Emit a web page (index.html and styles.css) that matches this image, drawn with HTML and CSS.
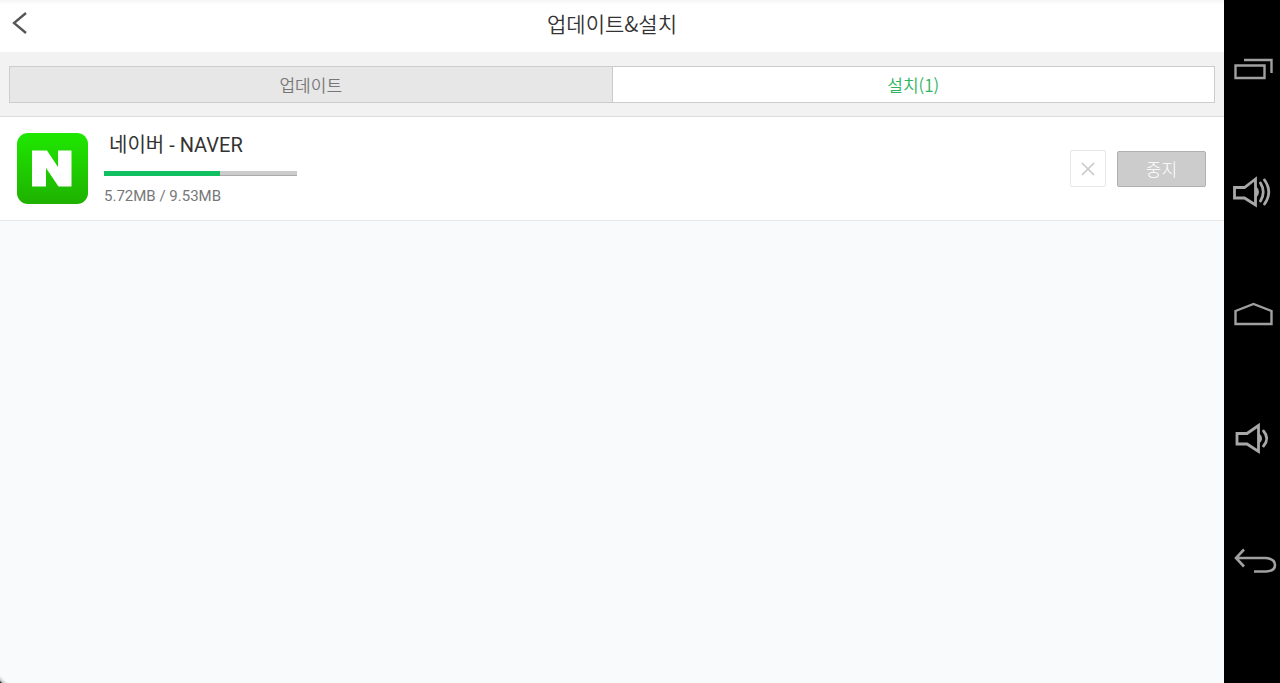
FILE: index.html
```
<!DOCTYPE html>
<html lang="ko">
<head>
    <meta charset="UTF-8">
    <meta name="viewport" content="width=device-width, initial-scale=1.0">
    <title>업데이트&amp;설치</title>
    <link rel="stylesheet" href="styles.css">
</head>
<body>
    <div class="app">
        <header class="header">
            <button class="back-btn" aria-label="뒤로">
                <svg width="16" height="24" viewBox="0 0 16 24"><path d="M14 2 L2 12 L14 22" fill="none" stroke="#555" stroke-width="2.3"/></svg>
            </button>
            <h1>업데이트&amp;설치</h1>
        </header>

        <div class="tab-bar">
            <div class="tabs" role="tablist">
                <button class="tab" role="tab" aria-selected="false">업데이트</button>
                <button class="tab active" role="tab" aria-selected="true">설치(1)</button>
            </div>
        </div>

        <main>
            <ul class="app-list">
                <li class="app-item">
                    <svg class="app-icon" viewBox="0 0 71 71">
                        <defs>
                            <linearGradient id="green" x1="0" y1="0" x2="0" y2="1">
                                <stop offset="0" stop-color="#1fe800"/>
                                <stop offset="1" stop-color="#1fb100"/>
                            </linearGradient>
                        </defs>
                        <rect width="71" height="71" rx="11" fill="url(#green)"/>
                        <path d="M15 17.5H30L41 34V17.5H54.5V53.5H41.5L29 35V53.5H15Z" fill="#fff"/>
                    </svg>
                    <div class="app-info">
                        <h2>네이버 - NAVER</h2>
                        <progress value="5.72" max="9.53" aria-label="다운로드"></progress>
                        <p>5.72MB / 9.53MB</p>
                    </div>
                    <button class="cancel-btn" aria-label="취소">
                        <svg width="14" height="14" viewBox="0 0 14 14"><path d="M1 1L13 13M13 1L1 13" stroke="#c8c8c8" stroke-width="1.6"/></svg>
                    </button>
                    <button class="stop-btn">중지</button>
                </li>
            </ul>
        </main>
    </div>

    <nav class="system-bar">
        <button aria-label="최근 앱">
            <svg width="44" height="40" viewBox="0 0 44 40"><path d="M5.5 16.5H34.5V29H5.5ZM14 11H41.5V24" fill="none" stroke="#a0a0a0" stroke-width="2.4"/></svg>
        </button>
        <button aria-label="볼륨 높이기">
            <svg width="44" height="40" viewBox="0 0 44 40"><g fill="none" stroke="#a8a8a8" stroke-width="2.8"><path d="M4.5 15.5H14.5L25.5 7V33L14.5 26H4.5Z"/><path d="M30.5 11Q36 20 30.5 29M34.5 8Q43 20 34.5 32" stroke-linecap="round"/></g><path d="M26 14Q32 20 26 26Z" fill="#a8a8a8"/></svg>
        </button>
        <button aria-label="홈">
            <svg width="44" height="40" viewBox="0 0 44 40"><path d="M5.5 16L23.5 9L41.5 16V29H5.5Z" fill="none" stroke="#a0a0a0" stroke-width="2.4"/></svg>
        </button>
        <button aria-label="볼륨 낮추기">
            <svg width="44" height="40" viewBox="0 0 44 40"><g fill="none" stroke="#a8a8a8" stroke-width="2.8"><path d="M7 15.5H17L28.5 7.5V33.5L17 26H7Z"/><path d="M33.5 13Q40 20.5 33.5 28" stroke-linecap="round"/></g><path d="M29 15Q35 20.5 29 26Z" fill="#a8a8a8"/></svg>
        </button>
        <button aria-label="뒤로 가기">
            <svg width="44" height="40" viewBox="0 0 44 40"><path d="M14 8.5L6 17L14 25.5M6 17H36Q45 18 45 24Q45 30 36 30.5H24" fill="none" stroke="#a0a0a0" stroke-width="2.6"/></svg>
        </button>
    </nav>
</body>
</html>
```
FILE: styles.css
```
* {
    box-sizing: border-box;
}
body {
    display: flex;
    min-height: 100vh;
    margin: 0;
    background: #f9fafc;
    font-family: Roboto, "Noto Sans CJK KR", sans-serif;
}
h1, h2, p, ul {
    margin: 0;
    padding: 0;
}
button {
    padding: 0;
    border: none;
    background: none;
    font-family: inherit;
    cursor: pointer;
}
svg {
    display: block;
    overflow: visible;
}
.app {
    position: relative;
    flex: 1;
}
/* rounded screen corner */
.app::after {
    content: "";
    position: absolute;
    bottom: 0;
    left: 0;
    width: 8px;
    height: 8px;
    background: linear-gradient(45deg, #222 5%, #ccc 20%, transparent 50%);
}
.header {
    display: grid;
    grid-template-columns: 40px 1fr 40px;
    align-items: center;
    height: 52px;
    padding-bottom: 6px;
    background: linear-gradient(#f5f5f5, #fff 5px);
}
.back-btn {
    padding-left: 12px;
}
.header h1 {
    color: #333;
    font-family: "Noto Sans CJK KR", sans-serif;
    font-size: 21px;
    font-weight: 350;
    line-height: 28px;
    text-align: center;
}
.tab-bar {
    padding: 14px 9px 13px;
    background: #f2f2f2;
    border-bottom: 1px solid #ddd;
}
.tabs {
    display: flex;
    height: 37px;
    border: 1px solid #ccc;
}
.tab {
    flex: 1;
    background: #e7e7e7;
    color: #777;
    font-family: "Noto Sans CJK KR", sans-serif;
    font-size: 17px;
    font-weight: 350;
}
.tab.active {
    background: #fff;
    border-left: 1px solid #ccc;
    color: #2db562;
}
.app-list {
    list-style: none;
}
.app-item {
    display: flex;
    align-items: center;
    padding: 16px 18px 16px 17px;
    background: #fff;
    border-bottom: 1px solid #e5e6e8;
}
.app-icon {
    width: 71px;
    height: 71px;
}
.app-info {
    flex: 1;
    margin-left: 16px;
}
.app-info h2 {
    padding-left: 5px;
    color: #333;
    font-size: 20px;
    font-weight: 400;
    line-height: 24px;
}
.app-info progress {
    display: block;
    width: 193px;
    height: 5px;
    margin: 14px 0 12px;
    border: none;
    appearance: none;
}
.app-info progress::-webkit-progress-bar {
    background: linear-gradient(#ccc 4px, #aaa 4px);
}
.app-info progress::-webkit-progress-value {
    background: #10c060;
}
.app-info p {
    color: #777;
    font-size: 15px;
    line-height: 16px;
}
.cancel-btn {
    display: flex;
    align-items: center;
    justify-content: center;
    width: 36px;
    height: 37px;
    margin-right: 11px;
    border: 1px solid #e8e8e8;
    border-radius: 2px;
}
.stop-btn {
    width: 89px;
    height: 36px;
    background: #ccc;
    border: 1px solid #b0b0b0;
    border-radius: 2px;
    color: #fff;
    font-size: 17px;
    font-weight: 300;
}
.system-bar {
    width: 56px;
    padding-top: 8px;
    background: #000;
}
.system-bar button {
    display: flex;
    align-items: center;
    justify-content: center;
    width: 100%;
    height: 18vh;
}
```
